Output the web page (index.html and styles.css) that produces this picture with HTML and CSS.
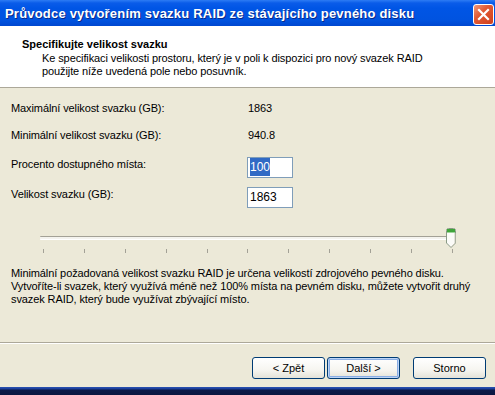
FILE: index.html
```html
<!DOCTYPE html>
<html lang="cs">
<head>
  <meta charset="UTF-8" />
  <title>Průvodce vytvořením svazku RAID</title>
  <link rel="stylesheet" href="styles.css">
</head>
<body>
  <div class="window">
    <div class="titlebar">
      <span class="title">Průvodce vytvořením svazku RAID ze stávajícího pevného disku</span>
      <div class="close">
        <svg width="13" height="13" viewBox="0 0 13 13">
          <path d="M2 2 L11 11 M11 2 L2 11" stroke="#fff" stroke-width="2.2" stroke-linecap="square" />
        </svg>
      </div>
    </div>

    <!-- page header -->
    <div class="header">
      <div class="heading">Specifikujte velikost svazku</div>
      <div class="subtext">Ke specifikaci velikosti prostoru, který je v poli k dispozici pro nový svazek RAID<br>použijte níže uvedená pole nebo posuvník.</div>
    </div>

    <div class="content">
      <div class="row first">
        <span class="label">Maximální velikost svazku (GB):</span>
        <span class="value">1863</span>
      </div>
      <div class="row second">
        <span class="label">Minimální velikost svazku (GB):</span>
        <span class="value">940.8</span>
      </div>
      <div class="row field">
        <span class="label">Procento dostupného místa:</span>
        <div class="textbox"><span class="sel">100</span></div>
      </div>
      <div class="row field last">
        <span class="label">Velikost svazku (GB):</span>
        <div class="textbox">1863</div>
      </div>

      <!-- trackbar -->
      <div class="slider">
        <div class="track"></div>
        <svg class="thumb" width="12" height="21" viewBox="0 0 12 21">
          <path d="M1.5 2.5 Q1.5 0.5 3.5 0.5 L8.5 0.5 Q10.5 0.5 10.5 2.5 L10.5 15 L6 19.5 L1.5 15 Z" fill="#fbfbf8" stroke="#8a9a86" />
          <path d="M2 1 L10 1 L10 4 L2 4 Z" fill="#3fa43a" />
          <path d="M2 4 L10 4 L10 5 L2 5 Z" fill="#9ed49a" />
          <path d="M10 5 L10 15 L6 19" fill="none" stroke="#c9c7ba" />
        </svg>
        <div class="ticks">
          <i></i><i></i><i></i><i></i><i></i><i></i><i></i><i></i><i></i><i></i><i></i>
        </div>
      </div>

      <p class="note">Minimální požadovaná velikost svazku RAID je určena velikostí zdrojového pevného disku.<br>Vytvoříte-li svazek, který využívá méně než 100% místa na pevném disku, můžete vytvořit druhý<br>svazek RAID, který bude využívat zbývající místo.</p>
    </div>

    <div class="footer">
      <button class="btn">&lt; Zpět</button>
      <button class="btn default">Další &gt;</button>
      <button class="btn cancel">Storno</button>
    </div>
    <div class="frame-bottom"></div>
  </div>
</body>
</html>
```

FILE: styles.css
```css
body {
  margin: 0;
  padding: 0;
  font-family: 'Liberation Sans', Arial, sans-serif;
  font-size: 11px;
  letter-spacing: -0.1px;
  color: #000;
}
.window {
  width: 495px;
  height: 395px;
  overflow: hidden;
  display: flex;
  flex-direction: column;
  background: #ece9d8;
}
.titlebar {
  height: 26px;
  flex: none;
  display: flex;
  align-items: center;
  justify-content: space-between;
  padding: 0 1px 0 5px;
  background: linear-gradient(to bottom, #2d7cf4 0px, #0a5ce9 3px, #0055e5 8px, #0053e0 20px, #0048d0 26px);
}
.title {
  color: #fff;
  font-weight: bold;
  font-size: 13px;
  letter-spacing: 0.2px;
  text-shadow: 1px 1px 0 #0a2a8a;
  margin-top: 1px;
}
.close {
  width: 19px;
  height: 19px;
  border: 1px solid #fff;
  border-radius: 3px;
  background: linear-gradient(135deg, #f09a7c 0%, #e25a34 40%, #cf3f1c 100%);
  display: flex;
  align-items: center;
  justify-content: center;
  margin-top: 2px;
}
.header {
  flex: none;
  background: #fff;
  border-bottom: 1px solid #aca899;
  padding: 12px 0 0 22px;
  box-sizing: border-box;
  height: 62px;
  line-height: 13px;
}
.heading {
  font-weight: bold;
  letter-spacing: 0;
}
.subtext {
  padding-left: 20px;
  margin-top: 1px;
}
.content {
  flex: 1;
  padding: 14px 0 0 11px;
  line-height: 13px;
}
.row {
  display: flex;
  align-items: flex-start;
}
.row.first {
  height: 27px;
}
.row.second {
  height: 28px;
}
.row.field {
  height: 30px;
}
.row.last {
  height: 21px;
}
.label {
  width: 237px;
  flex: none;
}
.row.field .label {
  padding-top: 1px;
}
.textbox {
  width: 42px;
  height: 19px;
  border: 1px solid #7f9db9;
  background: #fff;
  box-sizing: content-box;
  padding-left: 2px;
  margin-left: -1px;
  line-height: 19px;
  font-size: 12px;
  letter-spacing: 0;
}
.sel {
  background: #316ac5;
  color: #fff;
  padding: 2px 0;
}
.slider {
  position: relative;
  margin: 19px 0 0 29px;
  padding-top: 9px;
  box-sizing: border-box;
  width: 418px;
  height: 27px;
}
.track {
  height: 2px;
  background: #f4f3ee;
  border-top: 1px solid #a3a196;
  border-bottom: 1px solid #fff;
  border-radius: 1px;
  width: 412px;
}
.thumb {
  position: absolute;
  left: 405px;
  top: 1px;
}
.ticks {
  display: flex;
  justify-content: space-between;
  width: 410px;
  margin: 9px 0 0 3px;
}
.ticks i {
  display: block;
  width: 1px;
  height: 4px;
  background: #a3a196;
}
.note {
  margin: 13px 0 0 0;
  line-height: 13px;
}
.footer {
  height: 44px;
  flex: none;
  border-top: 1px solid #aca899;
  box-shadow: inset 0 1px 0 #fff;
  display: flex;
  align-items: flex-start;
  padding: 14px 0 0 252px;
  box-sizing: border-box;
}
.btn {
  width: 73px;
  height: 22px;
  border: 1px solid #003c74;
  border-radius: 3px;
  background: linear-gradient(to bottom, #fff 0%, #f6f5f0 60%, #e4e2d8 100%);
  font-family: 'Liberation Sans', Arial, sans-serif;
  font-size: 11px;
  color: #000;
  padding: 0;
  margin-right: 2px;
}
.btn.default {
  box-shadow: inset 0 0 0 1px #bcd4f6, inset 0 0 0 2px #89ade4;
}
.btn.cancel {
  margin-left: 11px;
}
.frame-bottom {
  height: 9px;
  flex: none;
  background: linear-gradient(to bottom, #ece9d8 0px, #ece9d8 1px, #2a53b3 1px, #1a3c96 3px, #0c1a48 4px, #0a1640 9px);
}
```
